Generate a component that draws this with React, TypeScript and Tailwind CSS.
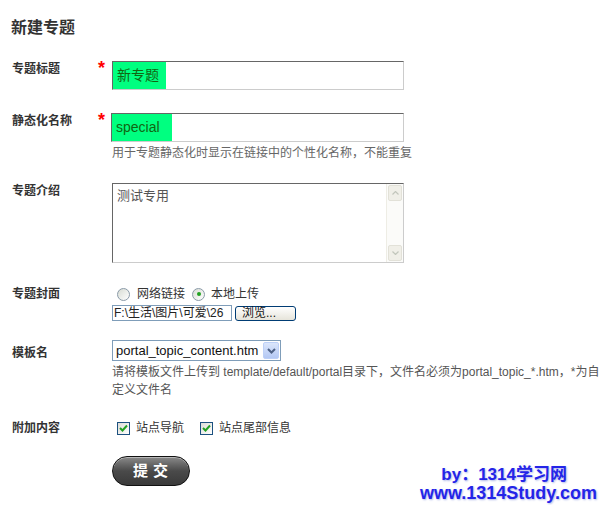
import React from "react";

const font = { fontFamily: '"Liberation Sans","Noto Sans CJK SC",sans-serif' };

function Radio({ checked }: { checked?: boolean }) {
  return (
    <span className="relative inline-block w-[13px] h-[13px] rounded-full border border-[#8a9aa8] bg-gradient-to-br from-[#d8dcd4] to-white">
      {checked && <span className="absolute left-[3.5px] top-[3.5px] w-[4px] h-[4px] rounded-full bg-[#21a121]" />}
    </span>
  );
}

function Check() {
  return (
    <span className="inline-flex items-center justify-center w-[13px] h-[13px] border border-[#1c5180] bg-gradient-to-br from-[#dcdcd6] to-white">
      <svg width="9" height="8" viewBox="0 0 9 8">
        <path d="M1 4 L3.5 6.5 L8 1.5" fill="none" stroke="#21a121" strokeWidth="2" />
      </svg>
    </span>
  );
}

const label = "w-[101px] shrink-0 pl-[1px] text-[12px] leading-[12px] font-bold text-[#333]";

export default function App() {
  return (
    <div className="relative w-[600px] h-[505px] overflow-hidden bg-white text-[#333]" style={font}>
      <div className="pl-[11px] pt-[17px]">
        <div className="text-[16px] leading-[22px] font-bold text-[#333]">新建专题</div>

        {/* Row 1 */}
        <div className="flex mt-[22px]">
          <div className="w-[87px] shrink-0 pl-[1px] text-[12px] leading-[12px] pt-[2px] font-bold">专题标题</div>
          <div className="w-[14px] shrink-0 text-[#ff0000] text-[18px] leading-[14px] font-bold">*</div>
          <div className="w-[292px] h-[29px] border border-t-[#666] border-l-[#666] border-r-[#ccc] border-b-[#ccc] flex">
            <div className="w-[53px] h-full bg-[#00ff80] pl-[4px] text-[14px] leading-[27px] text-[#116611]">新专题</div>
          </div>
        </div>

        {/* Row 2 */}
        <div className="flex mt-[23px]">
          <div className="w-[87px] shrink-0 pl-[1px] text-[12px] leading-[12px] pt-[2px] font-bold">静态化名称</div>
          <div className="w-[13px] shrink-0 text-[#ff0000] text-[18px] leading-[14px] font-bold">*</div>
          <div>
            <div className="w-[293px] h-[29px] border border-t-[#666] border-l-[#666] border-r-[#ccc] border-b-[#ccc] flex">
              <div className="w-[60px] h-full bg-[#00ff80] pl-[4px] text-[14px] leading-[27px] text-[#116611]">special</div>
            </div>
            <div className="mt-[3px] text-[12px] leading-[16px] text-[#666] whitespace-nowrap pl-[1px]">
              用于专题静态化时显示在链接中的个性化名称，不能重复
            </div>
          </div>
        </div>

        {/* Row 3 */}
        <div className="flex mt-[22px]">
          <div className={label + " pt-[2px]"}>专题介绍</div>
          <div className="w-[292px] h-[80px] border border-t-[#666] border-l-[#666] border-r-[#ccc] border-b-[#ccc] flex">
            <div className="flex-1 pl-[4px] pt-[4px] text-[13px] leading-[16px] text-[#555]">测试专用</div>
            <div className="w-[17px] h-full flex flex-col justify-between bg-[#fbfbf9] border-l border-[#eeede5]">
              <div className="h-[16px] mx-[1px] mt-[1px] rounded-[2px] bg-[#f0efe8] border border-[#e2e1d8] flex items-center justify-center">
                <svg width="7" height="4" viewBox="0 0 7 4"><path d="M0.5 3.5 L3.5 0.5 L6.5 3.5" fill="none" stroke="#c2c6bc" strokeWidth="1.2" /></svg>
              </div>
              <div className="h-[16px] mx-[1px] mb-[1px] rounded-[2px] bg-[#f0efe8] border border-[#e2e1d8] flex items-center justify-center">
                <svg width="7" height="4" viewBox="0 0 7 4"><path d="M0.5 0.5 L3.5 3.5 L6.5 0.5" fill="none" stroke="#c2c6bc" strokeWidth="1.2" /></svg>
              </div>
            </div>
          </div>
        </div>

        {/* Row 4 */}
        <div className="flex mt-[23px]">
          <div className={label + " pt-[2px]"}>专题封面</div>
          <div>
            <div className="flex items-center h-[16px] text-[12px] text-[#333]">
              <span className="ml-[5px] flex"><Radio /></span>
              <span className="ml-[7px]">网络链接</span>
              <span className="ml-[7px] flex"><Radio checked /></span>
              <span className="ml-[6px]">本地上传</span>
            </div>
            <div className="flex items-center mt-[3px]">
              <div className="w-[120px] h-[16px] shrink-0 border border-[#7f9db9] overflow-hidden whitespace-nowrap text-[12px] leading-[14px] text-[#222] pl-[1px]">
                F:\生活\图片\可爱\26
              </div>
              <div className="ml-[3px] w-[61px] h-[15px] shrink-0 rounded-[3px] border border-[#003c74] bg-gradient-to-b from-white to-[#e6e4da] text-[12px] leading-[13px] text-[#111] pl-[6px] whitespace-nowrap">
                浏览...
              </div>
            </div>
          </div>
        </div>

        {/* Row 5 */}
        <div className="flex mt-[19px]">
          <div className={label + " pt-[7px]"}>模板名</div>
          <div>
            <div className="w-[169px] h-[21px] border border-[#7f9db9] flex items-center justify-between">
              <span className="pl-[3px] text-[13px] text-[#111] whitespace-nowrap">portal_topic_content.htm</span>
              <span className="w-[16px] h-[17px] mr-[1px] shrink-0 rounded-[2px] bg-gradient-to-b from-[#dbe6fb] to-[#b4c8f4] border border-[#bdd0f7] flex items-center justify-center">
                <svg width="9" height="6" viewBox="0 0 9 6"><path d="M1 1 L4.5 4.5 L8 1" fill="none" stroke="#4d6185" strokeWidth="2" /></svg>
              </span>
            </div>
            <div className="mt-[2px] text-[12px] leading-[18px] text-[#555] whitespace-nowrap">
              <div>请将模板文件上传到 template/default/portal目录下，文件名必须为portal_topic_*.htm，*为自</div>
              <div>定义文件名</div>
            </div>
          </div>
        </div>

        {/* Row 6 */}
        <div className="flex mt-[21px]">
          <div className={label + " pt-[2px]"}>附加内容</div>
          <div className="flex items-center h-[16px] text-[12px] text-[#333]">
            <span className="ml-[5px] flex"><Check /></span>
            <span className="ml-[6px]">站点导航</span>
            <span className="ml-[16px] flex"><Check /></span>
            <span className="ml-[6px]">站点尾部信息</span>
          </div>
        </div>

        {/* Submit */}
        <div className="mt-[20px] ml-[101px]">
          <div className="w-[78px] h-[30px] rounded-[15px] border border-[#111] bg-gradient-to-b from-[#8a8a8a] via-[#4a4a4a] to-[#3a3a3a] flex items-center justify-center text-white text-[15px] font-bold tracking-[5px] pl-[4px] shadow-[inset_0_1px_0_rgba(255,255,255,0.4)]">
            提交
          </div>
        </div>
      </div>

      {/* Watermark */}
      <div
        className="absolute right-[3px] bottom-[2px] text-right font-bold text-[#2424e8] leading-[19px]"
        style={{ fontFamily: '"Liberation Sans","Noto Sans CJK SC",sans-serif', textShadow: "1px 1px 2px #b0b8e8" }}
      >
        <div className="text-[17px] pr-[30px]">by：1314学习网</div>
        <div className="text-[18px]">www.1314Study.com</div>
      </div>
    </div>
  );
}
